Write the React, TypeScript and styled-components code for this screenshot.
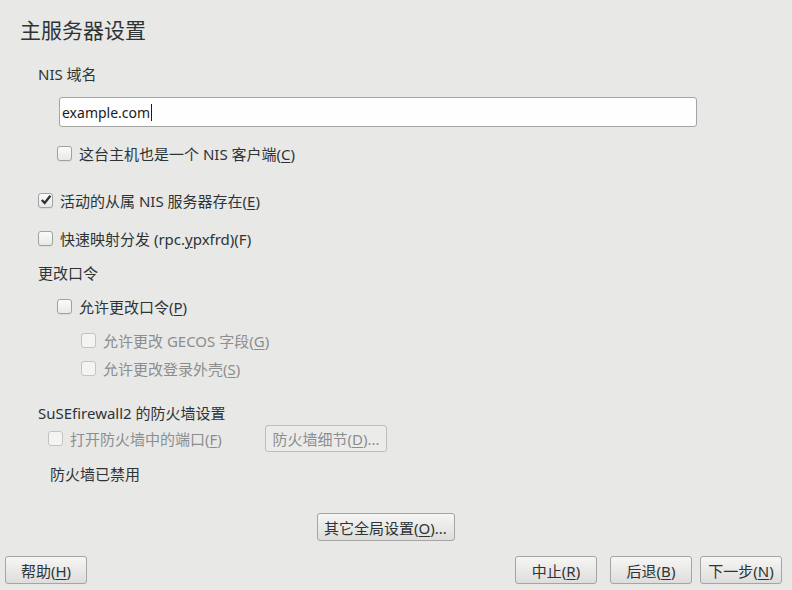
import React from 'react'
import styled, { createGlobalStyle, css } from 'styled-components'

const GlobalStyle = createGlobalStyle`
  html, body {
    margin: 0;
    padding: 0;
    background: #e8e8e7;
  }
  body {
    font-family: 'Noto Sans', 'Noto Sans CJK SC', sans-serif;
    font-size: 15px;
    color: #2e3436;
  }
`

const Page = styled.div`
  width: 792px;
  height: 590px;
  box-sizing: border-box;
  padding-top: 18px;
  display: flex;
  flex-direction: column;
  background: #e8e8e7;
  overflow: hidden;
`

const Title = styled.h1`
  margin: 0 0 0 20px;
  font-size: 21px;
  font-weight: 400;
  line-height: 24px;
  color: #2e3436;
`

const Label = styled.div<{ $mt: number; $indent: number }>`
  margin-top: ${({ $mt }) => $mt}px;
  margin-left: ${({ $indent }) => $indent}px;
  height: 20px;
  line-height: 20px;
  white-space: nowrap;
`

const Input = styled.div`
  margin: 13px 0 0 59px;
  width: 638px;
  height: 30px;
  box-sizing: border-box;
  border: 1px solid #a4a4a2;
  border-radius: 3px;
  background: #fefefe;
  display: flex;
  align-items: center;
  padding-left: 2px;
  font-size: 14px;
  color: #1c1c1c;
`

const Caret = styled.span`
  display: inline-block;
  width: 1px;
  height: 17px;
  background: #1c1c1c;
  margin-left: 1px;
`

const Row = styled.div<{ $mt: number; $indent: number; $disabled?: boolean }>`
  margin-top: ${({ $mt }) => $mt}px;
  margin-left: ${({ $indent }) => $indent}px;
  height: 20px;
  display: flex;
  align-items: center;
  gap: 7px;
  white-space: nowrap;
  color: ${({ $disabled }) => ($disabled ? '#8b8e8f' : '#2e3436')};
`

const Box = styled.span<{ $disabled?: boolean }>`
  width: 15px;
  height: 15px;
  box-sizing: border-box;
  border-radius: 3px;
  display: inline-flex;
  align-items: center;
  justify-content: center;
  flex: none;
  ${({ $disabled }) =>
    $disabled
      ? css`
          border: 1px solid #c4c4c2;
          background: #f4f4f3;
        `
      : css`
          border: 1px solid #a1a19f;
          background: linear-gradient(#fbfbfb, #e9e9e8);
          box-shadow: 0 1px 1px rgba(0, 0, 0, 0.06);
        `}
`

const Mn = styled.span`
  text-decoration: underline;
  text-underline-offset: 2px;
  text-decoration-thickness: 1px;
`

const FirewallLine = styled.div`
  margin: 2px 0 0 48px;
  display: flex;
  align-items: center;
`

const Button = styled.button<{ $w: number; $disabled?: boolean }>`
  width: ${({ $w }) => $w}px;
  height: 28px;
  box-sizing: border-box;
  padding: 0;
  border-radius: 3px;
  font-family: 'Noto Sans', 'Noto Sans CJK SC', sans-serif;
  font-size: 15px;
  white-space: nowrap;
  flex: none;
  ${({ $disabled }) =>
    $disabled
      ? css`
          border: 1px solid #bdbdbb;
          background: #ebebea;
          color: #8b8e8f;
        `
      : css`
          border: 1px solid #a5a5a3;
          background: linear-gradient(#f6f6f5, #dedddb);
          color: #2e3436;
        `}
`

const Centered = styled.div`
  margin-top: 29px;
  display: flex;
  justify-content: center;
  padding-right: 21px;
`

const BottomBar = styled.div`
  margin-top: 15px;
  padding: 0 10px 0 5px;
  display: flex;
  align-items: center;
`

const RightGroup = styled.div`
  margin-left: auto;
  display: flex;
  gap: 8px;
  & > :first-child {
    margin-right: 5px;
  }
`

const Check = () => (
  <svg width="12" height="12" viewBox="0 0 12 12">
    <path d="M1.8 6 L4.7 9 L10.4 1.8" fill="none" stroke="#2e3436" strokeWidth="2.4" strokeLinejoin="miter" />
  </svg>
)

type CheckProps = {
  mt: number
  indent: number
  checked?: boolean
  disabled?: boolean
  children: React.ReactNode
}

const CheckRow = ({ mt, indent, checked, disabled, children }: CheckProps) => (
  <Row $mt={mt} $indent={indent} $disabled={disabled}>
    <Box $disabled={disabled}>{checked && <Check />}</Box>
    <span>{children}</span>
  </Row>
)

export default function App() {
  return (
    <>
      <GlobalStyle />
      <Page>
        <Title>主服务器设置</Title>
        <Label $mt={22} $indent={38}>NIS 域名</Label>
        <Input>
          example.com
          <Caret />
        </Input>
        <CheckRow mt={16} indent={57}>
          这台主机也是一个 NIS 客户端(<Mn>C</Mn>)
        </CheckRow>
        <CheckRow mt={27} indent={38} checked>
          活动的从属 NIS 服务器存在(<Mn>E</Mn>)
        </CheckRow>
        <CheckRow mt={18} indent={38}>
          快速映射分发 (rpc.<Mn>y</Mn>pxfrd)(F)
        </CheckRow>
        <Label $mt={15} $indent={38}>更改口令</Label>
        <CheckRow mt={13} indent={57}>
          允许更改口令(<Mn>P</Mn>)
        </CheckRow>
        <CheckRow mt={14} indent={81} disabled>
          允许更改 GECOS 字段(<Mn>G</Mn>)
        </CheckRow>
        <CheckRow mt={8} indent={81} disabled>
          允许更改登录外壳(<Mn>S</Mn>)
        </CheckRow>
        <Label $mt={25} $indent={38}>SuSEfirewall2 的防火墙设置</Label>
        <FirewallLine>
          <CheckRow mt={0} indent={0} disabled>
            打开防火墙中的端口(<Mn>F</Mn>)
          </CheckRow>
          <Button $w={122} $disabled style={{ marginLeft: 'auto', marginRight: 405, height: 27 }}>
            防火墙细节(<Mn>D</Mn>)...
          </Button>
        </FirewallLine>
        <Label $mt={12} $indent={50}>防火墙已禁用</Label>
        <Centered>
          <Button $w={138}>
            其它全局设置(<Mn>O</Mn>)...
          </Button>
        </Centered>
        <BottomBar>
          <Button $w={82}>
            帮助(<Mn>H</Mn>)
          </Button>
          <RightGroup>
            <Button $w={82}>
              中止(<Mn>R</Mn>)
            </Button>
            <Button $w={82}>
              后退(<Mn>B</Mn>)
            </Button>
            <Button $w={82}>
              下一步(<Mn>N</Mn>)
            </Button>
          </RightGroup>
        </BottomBar>
      </Page>
    </>
  )
}
